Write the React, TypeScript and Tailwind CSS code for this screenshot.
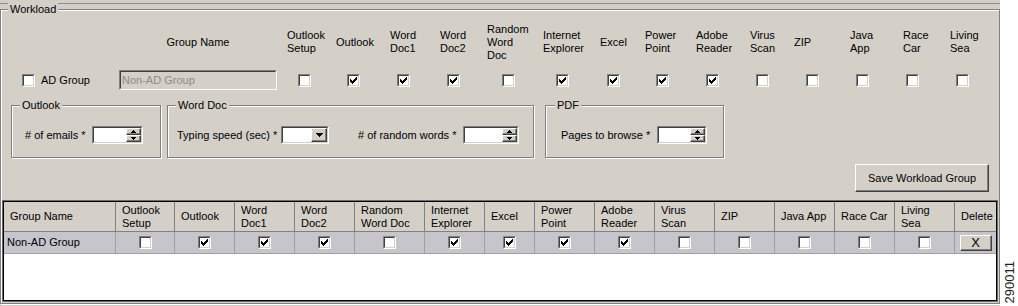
import React from "react";

function CheckMark() {
  return (
    <svg width="7" height="7" viewBox="0 0 7 7" shapeRendering="crispEdges" className="block">
      <rect x="0" y="2" width="1" height="3" fill="#000" />
      <rect x="1" y="3" width="1" height="3" fill="#000" />
      <rect x="2" y="4" width="1" height="3" fill="#000" />
      <rect x="3" y="3" width="1" height="3" fill="#000" />
      <rect x="4" y="2" width="1" height="3" fill="#000" />
      <rect x="5" y="1" width="1" height="3" fill="#000" />
      <rect x="6" y="0" width="1" height="3" fill="#000" />
    </svg>
  );
}

function Checkbox({ checked }: { checked?: boolean }) {
  return (
    <div className="w-[13px] h-[13px] shrink-0 border border-t-[#808080] border-l-[#808080] border-b-white border-r-white">
      <div className="w-full h-full border border-t-[#404040] border-l-[#404040] border-b-[#d4d0c8] border-r-[#d4d0c8] bg-white flex items-center justify-center">
        {checked && <CheckMark />}
      </div>
    </div>
  );
}

function Sunken({ className, inner, children }: { className: string; inner?: string; children?: React.ReactNode }) {
  return (
    <div className={`shrink-0 border border-t-[#808080] border-l-[#808080] border-b-white border-r-white ${className}`}>
      <div className={`w-full h-full flex border border-t-[#404040] border-l-[#404040] border-b-[#d4d0c8] border-r-[#d4d0c8] ${inner ?? ""}`}>
        {children}
      </div>
    </div>
  );
}

function UpArrow() {
  return (
    <svg width="5" height="3" viewBox="0 0 5 3" shapeRendering="crispEdges" className="block">
      <rect x="2" y="0" width="1" height="1" fill="#000" />
      <rect x="1" y="1" width="3" height="1" fill="#000" />
      <rect x="0" y="2" width="5" height="1" fill="#000" />
    </svg>
  );
}

function DownArrow({ big }: { big?: boolean }) {
  if (big) {
    return (
      <svg width="7" height="4" viewBox="0 0 7 4" shapeRendering="crispEdges" className="block">
        <rect x="0" y="0" width="7" height="1" fill="#000" />
        <rect x="1" y="1" width="5" height="1" fill="#000" />
        <rect x="2" y="2" width="3" height="1" fill="#000" />
        <rect x="3" y="3" width="1" height="1" fill="#000" />
      </svg>
    );
  }
  return (
    <svg width="5" height="3" viewBox="0 0 5 3" shapeRendering="crispEdges" className="block">
      <rect x="0" y="0" width="5" height="1" fill="#000" />
      <rect x="1" y="1" width="3" height="1" fill="#000" />
      <rect x="2" y="2" width="1" height="1" fill="#000" />
    </svg>
  );
}

function RaisedSmall({ className, children }: { className: string; children?: React.ReactNode }) {
  return (
    <div
      className={`bg-[#d4d0c8] border border-t-white border-l-white border-b-[#404040] border-r-[#404040] shadow-[inset_-1px_-1px_0_#808080] flex items-center justify-center ${className}`}
    >
      {children}
    </div>
  );
}

function SpinBox({ className }: { className: string }) {
  return (
    <Sunken className={className} inner="bg-white">
      <div className="flex-1 bg-white" />
      <div className="w-[15px] flex flex-col">
        <RaisedSmall className="h-[7px] w-full">
          <UpArrow />
        </RaisedSmall>
        <RaisedSmall className="h-[7px] w-full">
          <DownArrow />
        </RaisedSmall>
      </div>
    </Sunken>
  );
}

function Combo({ className }: { className: string }) {
  return (
    <Sunken className={className} inner="bg-white">
      <div className="flex-1 bg-white" />
      <RaisedSmall className="w-[16px] h-full">
        <DownArrow big />
      </RaisedSmall>
    </Sunken>
  );
}

function GroupBox({ title, className, titleClass, children }: { title: string; className: string; titleClass: string; children?: React.ReactNode }) {
  return (
    <div className={`relative shrink-0 border border-[#808080] shadow-[inset_1px_1px_0_#fff,1px_1px_0_#fff] ${className}`}>
      <span className={`absolute -top-[7px] px-[2px] bg-[#d4d0c8] leading-[13px] whitespace-nowrap ${titleClass}`}>{title}</span>
      {children}
    </div>
  );
}

type TopCol = { label: string[]; w: string; ml: string; checked: boolean };

const topCols: TopCol[] = [
  { label: ["Outlook", "Setup"], w: "w-[49px]", ml: "ml-[11px]", checked: false },
  { label: ["Outlook"], w: "w-[54px]", ml: "ml-[11px]", checked: true },
  { label: ["Word", "Doc1"], w: "w-[50px]", ml: "ml-[7px]", checked: true },
  { label: ["Word", "Doc2"], w: "w-[47px]", ml: "ml-[7px]", checked: true },
  { label: ["Random", "Word", "Doc"], w: "w-[56px]", ml: "ml-[15px]", checked: false },
  { label: ["Internet", "Explorer"], w: "w-[57px]", ml: "ml-[13px]", checked: true },
  { label: ["Excel"], w: "w-[45px]", ml: "ml-[7px]", checked: true },
  { label: ["Power", "Point"], w: "w-[51px]", ml: "ml-[11px]", checked: true },
  { label: ["Adobe", "Reader"], w: "w-[54px]", ml: "ml-[10px]", checked: true },
  { label: ["Virus", "Scan"], w: "w-[44px]", ml: "ml-[6px]", checked: false },
  { label: ["ZIP"], w: "w-[56px]", ml: "ml-[12px]", checked: false },
  { label: ["Java", "App"], w: "w-[53px]", ml: "ml-[6px]", checked: false },
  { label: ["Race", "Car"], w: "w-[47px]", ml: "ml-[3px]", checked: false },
  { label: ["Living", "Sea"], w: "w-[48px]", ml: "ml-[6px]", checked: false },
];

const tableCols: { label: string[]; checked: boolean }[] = [
  { label: ["Outlook", "Setup"], checked: false },
  { label: ["Outlook"], checked: true },
  { label: ["Word", "Doc1"], checked: true },
  { label: ["Word", "Doc2"], checked: true },
  { label: ["Random", "Word Doc"], checked: false },
  { label: ["Internet", "Explorer"], checked: true },
  { label: ["Excel"], checked: true },
  { label: ["Power", "Point"], checked: true },
  { label: ["Adobe", "Reader"], checked: true },
  { label: ["Virus", "Scan"], checked: false },
  { label: ["ZIP"], checked: false },
  { label: ["Java App"], checked: false },
  { label: ["Race Car"], checked: false },
  { label: ["Living", "Sea"], checked: false },
];

function Lines({ lines }: { lines: string[] }) {
  return (
    <div className="leading-[13px] whitespace-nowrap">
      {lines.map((l, i) => (
        <div key={i}>{l}</div>
      ))}
    </div>
  );
}

export default function App() {
  return (
    <div className="w-[1018px] h-[306px] bg-white flex overflow-hidden font-['Liberation_Sans',Arial,Helvetica,sans-serif] text-[11px] text-black">
      <div className="w-[1000px] h-[306px] bg-[#d4d0c8] flex flex-col shrink-0">
        <div className="mt-[3px] h-[1px] bg-[#8c8c8c]" />
        <div className="relative mt-[5px] pb-[1px] border border-[#808080] shadow-[inset_1px_1px_0_#fff,1px_1px_0_#fff] flex flex-col">
          <span className="absolute -top-[7px] left-[7px] px-[2px] bg-[#d4d0c8] leading-[13px]">Workload</span>

          {/* label + controls row */}
          <div className="flex pl-[21px] mt-[12px]">
            <div className="flex flex-col w-[97px] shrink-0">
              <div className="h-[40px]" />
              <div className="mt-[8px] h-[20px] flex items-center gap-[6px]">
                <Checkbox />
                <span className="leading-[13px] whitespace-nowrap">AD Group</span>
              </div>
            </div>
            <div className="flex flex-col w-[168px] shrink-0">
              <div className="h-[40px] w-[158px] flex items-center justify-center">
                <span className="leading-[13px] whitespace-nowrap">Group Name</span>
              </div>
              <div className="mt-[8px] h-[20px] flex items-center">
                <Sunken className="w-[158px] h-[20px]" inner="bg-[#d4d0c8] items-center">
                  <span className="pl-[1px] text-[#8a8a8a] leading-[13px] whitespace-nowrap">Non-AD Group</span>
                </Sunken>
              </div>
            </div>
            {topCols.map((c, i) => (
              <div key={i} className={`flex flex-col shrink-0 ${c.w}`}>
                <div className="h-[40px] flex items-center">
                  <Lines lines={c.label} />
                </div>
                <div className="mt-[8px] h-[20px] flex items-center">
                  <div className={c.ml}>
                    <Checkbox checked={c.checked} />
                  </div>
                </div>
              </div>
            ))}
          </div>

          {/* group boxes */}
          <div className="flex pl-[10px] mt-[15px]">
            <GroupBox title="Outlook" className="w-[150px] h-[53px]" titleClass="left-[8px]">
              <div className="flex items-center pt-[20px] pl-[13px]">
                <span className="w-[67px] leading-[13px] whitespace-nowrap">#&nbsp;of emails *</span>
                <SpinBox className="w-[51px] h-[18px]" />
              </div>
            </GroupBox>
            <GroupBox title="Word Doc" className="ml-[6px] w-[367px] h-[53px]" titleClass="left-[8px]">
              <div className="flex items-center pt-[20px] pl-[9px]">
                <span className="w-[104px] leading-[13px] whitespace-nowrap">Typing speed (sec) *</span>
                <Combo className="w-[48px] h-[18px]" />
                <span className="ml-[29px] w-[105px] leading-[13px] whitespace-nowrap"># of random words *</span>
                <SpinBox className="w-[56px] h-[18px]" />
              </div>
            </GroupBox>
            <GroupBox title="PDF" className="ml-[11px] w-[179px] h-[53px]" titleClass="left-[9px]">
              <div className="flex items-center pt-[20px] pl-[15px]">
                <span className="w-[96px] leading-[13px] whitespace-nowrap">Pages to browse *</span>
                <SpinBox className="w-[50px] h-[18px]" />
              </div>
            </GroupBox>
          </div>

          {/* save button */}
          <div className="flex justify-end pr-[10px] mt-[6px]">
            <div className="w-[134px] h-[28px] bg-[#d4d0c8] border border-t-white border-l-white border-b-[#404040] border-r-[#404040] shadow-[inset_-1px_-1px_0_#808080] flex items-center justify-center">
              <span className="leading-[13px] whitespace-nowrap">Save Workload Group</span>
            </div>
          </div>

          {/* table */}
          <div className="mt-[8px] ml-[1px] w-[996px] h-[102px] border border-[#6e6e6e]">
            <div className="w-full h-full border border-[#000] bg-white">
              <div className="grid grid-cols-[112px_59px_60px_60px_60px_70px_60px_50px_60px_60px_60px_60px_60px_60px_60px_41px]">
                <div className="h-[30px] bg-[#d4d0c8] border-r border-b border-[#808080] pl-[6px] flex items-center">
                  <Lines lines={["Group Name"]} />
                </div>
                {tableCols.map((c, i) => (
                  <div key={i} className="h-[30px] bg-[#d4d0c8] border-r border-b border-[#808080] pl-[6px] flex items-center">
                    <Lines lines={c.label} />
                  </div>
                ))}
                <div className="h-[30px] bg-[#d4d0c8] border-b border-[#808080] pl-[6px] flex items-center">
                  <Lines lines={["Delete"]} />
                </div>

                <div className="h-[22px] bg-[#c5c5cb] border-r border-b border-[#a0a0a0] pl-[3px] flex items-center">
                  <span className="leading-[13px] whitespace-nowrap">Non-AD Group</span>
                </div>
                {tableCols.map((c, i) => (
                  <div key={i} className="h-[22px] bg-[#c5c5cb] border-r border-b border-[#a0a0a0] flex items-center justify-center">
                    <Checkbox checked={c.checked} />
                  </div>
                ))}
                <div className="h-[22px] bg-[#c5c5cb] border-b border-[#a0a0a0] flex items-center justify-center">
                  <div className="w-[32px] h-[16px] bg-[#d4d0c8] border border-t-white border-l-white border-b-[#404040] border-r-[#404040] shadow-[inset_-1px_-1px_0_#808080] flex items-center justify-center">
                    <span className="text-[13px] leading-none">X</span>
                  </div>
                </div>
              </div>
            </div>
          </div>
        </div>
      </div>
      <div className="flex-1 flex items-end justify-center pb-[3px]">
        <span className="[writing-mode:vertical-rl] rotate-180 text-[13px] leading-none text-[#222]">290011</span>
      </div>
    </div>
  );
}
